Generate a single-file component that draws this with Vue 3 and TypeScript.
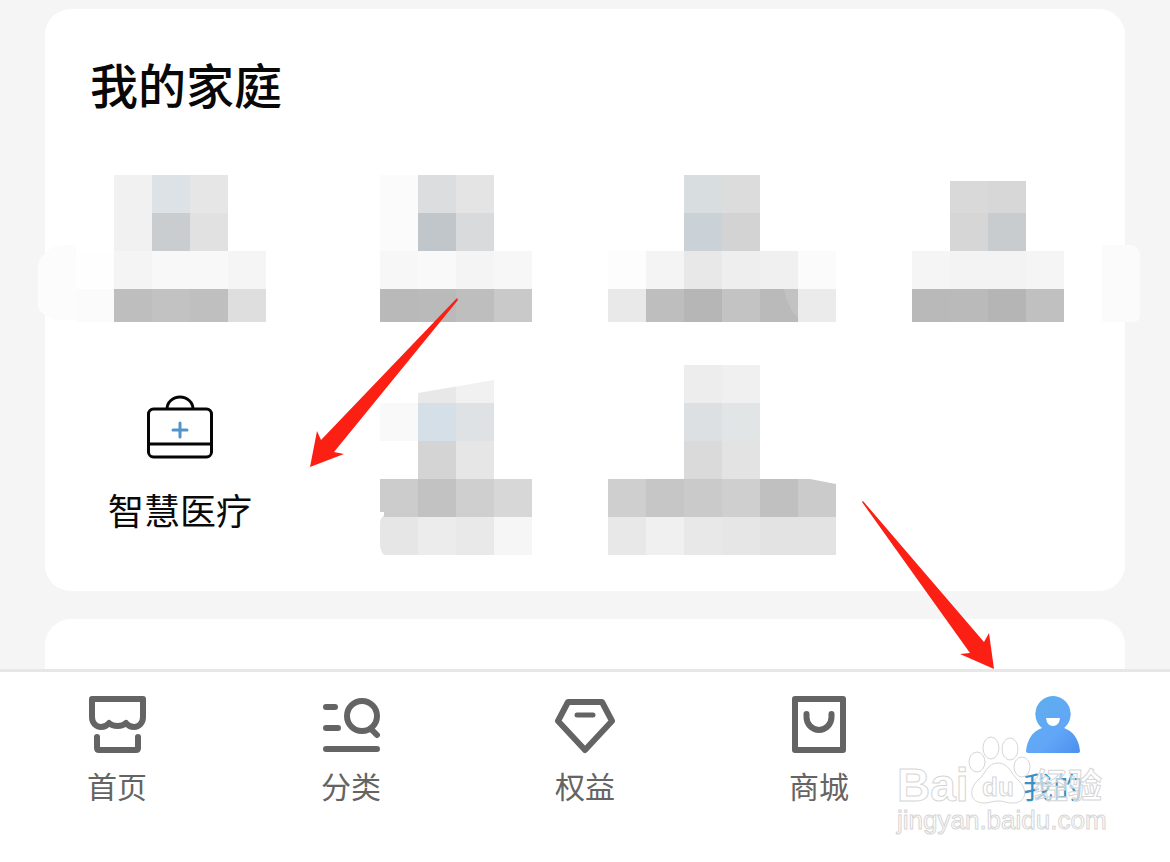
<script setup lang="ts">
type Block = [x: number, y: number, w: number, h: number, fill: string]

interface Mosaic {
  id: string
  height: number
  blocks: Block[]
  clip?: string
}

interface Tab {
  id: string
  label: string
  active?: boolean
}

const family: Mosaic[] = [
  {
    id: 'f1',
    height: 148,
    blocks: [
      [10, 76, 38, 38, '#fefefe'], [10, 114, 38, 33, '#fbfbfb'],
      [48, 0, 38, 76, '#f1f1f1'], [86, 0, 38, 38, '#dde2e6'], [124, 0, 38, 38, '#e6e6e6'],
      [86, 38, 38, 38, '#c9cdd0'], [124, 38, 38, 38, '#e1e1e1'],
      [48, 76, 38, 38, '#f4f4f4'], [86, 76, 76, 38, '#f8f8f8'], [162, 76, 38, 38, '#f5f5f5'],
      [48, 114, 38, 33, '#bebebe'], [86, 114, 38, 33, '#c2c2c2'], [124, 114, 38, 33, '#bfbfbf'],
      [162, 114, 38, 33, '#dedede'],
    ],
  },
  {
    id: 'f2',
    height: 148,
    blocks: [
      [48, 0, 38, 76, '#fbfbfb'], [86, 0, 38, 38, '#dcddde'], [124, 0, 38, 38, '#e4e4e4'],
      [86, 38, 38, 38, '#c0c6ca'], [124, 38, 38, 38, '#d9dadb'],
      [48, 76, 38, 38, '#f7f7f7'], [86, 76, 38, 38, '#f9f9f9'], [124, 76, 38, 38, '#f4f4f4'],
      [162, 76, 38, 38, '#f7f7f7'],
      [48, 114, 38, 33, '#b9b9b9'], [86, 114, 38, 33, '#bababa'], [124, 114, 38, 33, '#bebebe'],
      [162, 114, 38, 33, '#c9c9c9'],
    ],
  },
  {
    id: 'f3',
    height: 148,
    blocks: [
      [86, 0, 38, 38, '#d8dde0'], [124, 0, 38, 38, '#dcdcdc'],
      [86, 38, 38, 38, '#cbd2d7'], [124, 38, 38, 38, '#d3d3d3'],
      [10, 76, 38, 38, '#fdfdfd'], [48, 76, 38, 38, '#f4f4f4'], [86, 76, 38, 38, '#e8e8e8'],
      [124, 76, 38, 38, '#eeeeee'], [162, 76, 38, 38, '#f0f0f0'], [200, 76, 38, 38, '#fbfbfb'],
      [10, 114, 38, 33, '#e9e9e9'], [48, 114, 38, 33, '#bebebe'], [86, 114, 38, 33, '#b6b6b6'],
      [124, 114, 38, 33, '#c3c3c3'], [162, 114, 38, 33, '#bababa'], [200, 114, 38, 33, '#ebebeb'],
    ],
  },
  {
    id: 'f4',
    height: 148,
    blocks: [
      [86, 6, 38, 32, '#d9d9d9'], [124, 6, 38, 32, '#d7d7d7'],
      [86, 38, 38, 38, '#d6d6d6'], [124, 38, 38, 38, '#c9cccf'],
      [48, 76, 38, 38, '#f5f5f5'], [86, 76, 76, 38, '#f3f3f3'], [162, 76, 38, 38, '#f5f5f5'],
      [48, 114, 38, 33, '#b9b9b9'], [86, 114, 38, 33, '#bababa'], [124, 114, 38, 33, '#b5b5b5'],
      [162, 114, 38, 33, '#c0c0c0'],
    ],
  },
]

const services: Mosaic[] = [
  {
    id: 's1',
    height: 190,
    clip: 'M48 38H86V28L162 15V114H200V190H52Q48 186 48 178V158Q48 153 52 151V147H48Z',
    blocks: [
      [86, 15, 38, 23, '#e8e8e8'], [124, 15, 38, 23, '#f1f1f1'],
      [48, 38, 38, 38, '#f9f9f9'], [86, 38, 38, 38, '#d5dfe8'], [124, 38, 38, 38, '#dfe2e5'],
      [86, 76, 38, 38, '#d4d4d4'], [124, 76, 38, 38, '#e6e6e6'],
      [48, 114, 38, 38, '#cccccc'], [86, 114, 38, 38, '#c2c2c2'], [124, 114, 38, 38, '#cfcfcf'],
      [162, 114, 38, 38, '#d7d7d7'],
      [48, 152, 38, 38, '#e6e6e6'], [86, 152, 38, 38, '#ececec'], [124, 152, 38, 38, '#e9e9e9'],
      [162, 152, 38, 38, '#f6f6f6'],
    ],
  },
  {
    id: 's2',
    height: 190,
    clip: 'M10 0H200V114H212L238 119V190H10Z',
    blocks: [
      [86, 0, 38, 38, '#ededed'], [124, 0, 38, 38, '#f0f0f0'],
      [86, 38, 38, 38, '#dce0e3'], [124, 38, 38, 38, '#e1e5e6'],
      [86, 76, 38, 38, '#dadada'], [124, 76, 38, 38, '#e3e3e3'],
      [10, 114, 38, 38, '#cfcfcf'], [48, 114, 38, 38, '#c6c6c6'], [86, 114, 38, 38, '#cacaca'],
      [124, 114, 38, 38, '#cfcfcf'], [162, 114, 38, 38, '#c0c0c0'], [200, 114, 38, 38, '#cbcbcb'],
      [10, 152, 38, 38, '#e8e8e8'], [48, 152, 38, 38, '#f0f0f0'], [86, 152, 38, 38, '#e8e8e8'],
      [124, 152, 38, 38, '#e6e6e6'], [162, 152, 76, 38, '#e3e3e3'],
    ],
  },
]

const tabs: Tab[] = [
  { id: 'home', label: '首页' },
  { id: 'category', label: '分类' },
  { id: 'benefits', label: '权益' },
  { id: 'mall', label: '商城' },
  { id: 'mine', label: '我的', active: true },
]
</script>

<template>
  <div class="page">
    <main class="content">
      <section class="card">
        <h1 class="title">我的家庭</h1>
        <div class="grid">
          <div v-for="item in family" :key="item.id" class="cell">
            <svg class="mosaic" width="228" :height="item.height" shape-rendering="crispEdges" aria-hidden="true">
              <path v-if="item.id === 'f1'" d="M10 70H-4Q-18 72-22 80Q-28 84-28 92V132Q-24 142-10 145H10Z" fill="#fcfcfc" />
              <path v-if="item.id === 'f4'" d="M238 70H268Q276 72 276 82V140Q276 147 268 147H238Z" fill="#fbfbfb" />
              <rect v-for="(b, i) in item.blocks" :key="i" :x="b[0]" :y="b[1]" :width="b[2]" :height="b[3]" :fill="b[4]" />
              <path v-if="item.id === 'f3'" d="M186 114H200V143Q190 134 186 114Z" fill="#c2c2c2" />
            </svg>
          </div>
          <button type="button" class="service">
            <svg width="72" height="66" viewBox="0 0 72 66" fill="none" stroke="#050505" stroke-width="3" aria-hidden="true">
              <path d="M23 14A13 12 0 0 1 49 14" />
              <rect x="4.5" y="14" width="63" height="48" rx="5" />
              <path d="M4 49H68" />
              <path d="M36 28V42M29 35H43" stroke="#5592c8" stroke-linecap="round" />
            </svg>
            <span class="service-label">智慧医疗</span>
          </button>
          <div v-for="item in services" :key="item.id" class="cell">
            <svg class="mosaic" width="228" :height="item.height" shape-rendering="crispEdges" aria-hidden="true">
              <clipPath :id="'clip-' + item.id"><path :d="item.clip" /></clipPath>
              <g :clip-path="'url(#clip-' + item.id + ')'">
                <rect v-for="(b, i) in item.blocks" :key="i" :x="b[0]" :y="b[1]" :width="b[2]" :height="b[3]" :fill="b[4]" />
              </g>
            </svg>
          </div>
        </div>
      </section>
      <section class="card next"></section>
    </main>

    <nav class="tabbar">
      <a v-for="tab in tabs" :key="tab.id" :href="'#' + tab.id" class="tab" :class="{ active: tab.active }">
        <svg class="tab-icon" width="60" height="60" viewBox="0 0 60 60" aria-hidden="true">
          <template v-if="tab.id === 'home'">
            <path d="M5 4H56V22C56 28 52 32 47 32Q42 32 39 28Q36 31 30.5 31Q25 31 22 28Q19 32 14 32C9 32 5 28 5 22Z" />
            <path d="M10 42V53Q10 55 12 55H49Q51 55 51 53V42" />
          </template>
          <template v-else-if="tab.id === 'category'">
            <path d="M5 12H14M5 33H17M5 54H56M50 34L56 40" />
            <circle cx="41" cy="21" r="15" />
          </template>
          <template v-else-if="tab.id === 'benefits'">
            <path d="M13 7H47L57 26L30 55L3 26Z" />
            <path d="M22 20H38" stroke-width="5" />
          </template>
          <template v-else-if="tab.id === 'mall'">
            <rect x="6" y="4" width="48" height="51" />
            <path d="M17.5 19V22A12.5 13 0 0 0 42.5 22V19" />
          </template>
          <template v-else>
            <defs>
              <linearGradient id="person" x1="0" y1="0" x2="1" y2="1">
                <stop offset="0" stop-color="#5cb0e8" />
                <stop offset="0.6" stop-color="#62a6f8" />
                <stop offset="1" stop-color="#4a90ee" />
              </linearGradient>
            </defs>
            <path
              d="M30 1A18 18 0 0 1 41 33Q55 38 57 56Q57 58 55 58H5Q3 58 3 56Q5 38 19 33A18 18 0 0 1 30 1Z"
              fill="url(#person)" stroke="none"
            />
            <path d="M23 23H37Q36 31 30 31Q24 31 23 23Z" fill="#fff" stroke="none" />
          </template>
        </svg>
        <span class="tab-label">{{ tab.label }}</span>
      </a>

      <svg class="watermark" width="240" height="110" viewBox="0 0 240 110">
        <g class="mark">
          <text class="mark-bold" x="17" y="71" font-size="46">Bai</text>
          <ellipse cx="97" cy="32" rx="8" ry="10" />
          <ellipse cx="111" cy="18" rx="8" ry="11" />
          <ellipse cx="130" cy="19" rx="8" ry="11" />
          <ellipse cx="142" cy="37" rx="8" ry="10" />
          <path d="M118 33C129 33 131 44 138 50C149 60 146 73 133 73C126 73 124 71 118 71C112 71 110 73 104 73C90 73 88 60 98 50C106 44 107 33 118 33Z" />
          <text class="mark-bold" x="102" y="66" font-size="26">du</text>
          <text class="mark-bold" x="154" y="68" font-size="34">经验</text>
          <text x="17" y="99" font-size="26">jingyan.baidu.com</text>
        </g>
      </svg>
    </nav>

    <svg class="arrows" width="1170" height="862" viewBox="0 0 1170 862" fill="#fb1f14" aria-hidden="true">
      <path d="M457 298L458 300L334 452L344 454L310 467L317 431L321 440Z" />
      <path d="M862 502L863 501L984 642L989 633L994 669L960 654L970 653Z" />
    </svg>
  </div>
</template>

<style>
body {
  margin: 0;
}
</style>

<style scoped>
.page {
  position: relative;
  display: flex;
  flex-direction: column;
  height: 100vh;
  overflow: hidden;
  background: #f5f5f5;
  font-family: "Liberation Sans", "Noto Sans CJK SC", sans-serif;
}

.content {
  flex: 1;
  min-height: 0;
  display: flex;
  flex-direction: column;
  gap: 28px;
  padding: 9px 45px 0;
}

.card {
  flex-shrink: 0;
  box-sizing: border-box;
  padding: 47px 14px 36px 2px;
  border-radius: 26px;
  background: #fff;
}

.card.next {
  flex: 1;
  padding: 0;
  border-radius: 26px 26px 0 0;
}

.title {
  margin: 0 0 55px;
  padding-left: 43px;
  font-size: 48px;
  line-height: 64px;
  font-weight: 500;
  color: #080808;
}

.grid {
  display: grid;
  grid-template-columns: repeat(4, 1fr);
  row-gap: 42px;
}

.cell {
  display: flex;
  justify-content: center;
}

.mosaic {
  display: block;
  flex-shrink: 0;
  overflow: visible;
}

.service {
  display: flex;
  flex-direction: column;
  align-items: center;
  gap: 28px;
  padding: 30px 0 0;
  border: 0;
  background: none;
  font: inherit;
  color: #0a0a0a;
}

.service-label {
  font-size: 36px;
  line-height: 48px;
}

.tabbar {
  position: relative;
  display: flex;
  box-sizing: border-box;
  height: 193px;
  border-top: 3px solid #e7e7e7;
  background: #fff;
}

.tab {
  flex: 1;
  display: flex;
  flex-direction: column;
  align-items: center;
  gap: 13px;
  padding-top: 23px;
  color: #646464;
  text-decoration: none;
}

.tab-icon {
  fill: none;
  stroke: #646464;
  stroke-width: 6;
  stroke-linecap: round;
  stroke-linejoin: round;
}

.tab-label {
  font-size: 30px;
  line-height: 40px;
}

.tab.active {
  color: #3b8fc4;
}

.watermark {
  position: absolute;
  top: 58px;
  right: 50px;
  pointer-events: none;
}

.mark {
  fill: #fff;
  fill-opacity: 0.6;
  stroke: #d6d6d6;
  stroke-width: 1;
}

.mark-bold {
  font-weight: 700;
}

.arrows {
  position: absolute;
  top: 0;
  left: 0;
  pointer-events: none;
}
</style>
